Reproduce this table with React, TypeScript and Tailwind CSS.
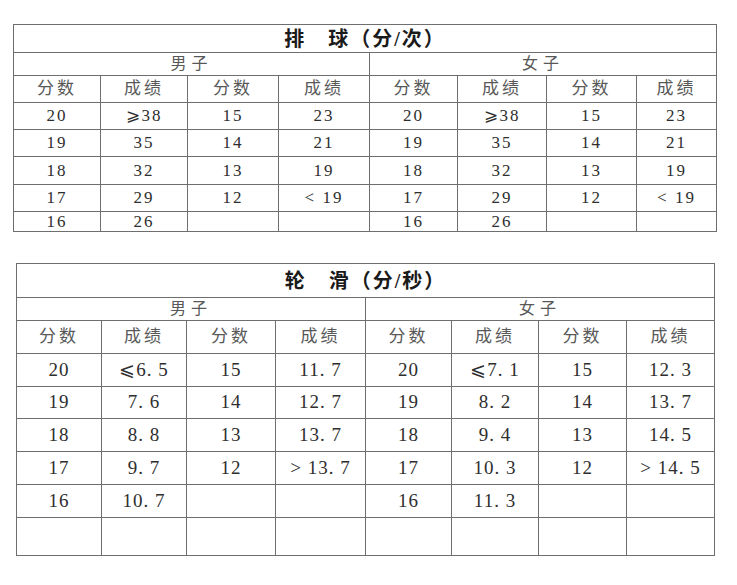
// two score sheets: volleyball and roller skating
const HEAD = ["分数", "成绩", "分数", "成绩", "分数", "成绩", "分数", "成绩"];

const volleyballRows = [
  ["20", "⩾38", "15", "23", "20", "⩾38", "15", "23"],
  ["19", "35", "14", "21", "19", "35", "14", "21"],
  ["18", "32", "13", "19", "18", "32", "13", "19"],
  ["17", "29", "12", "< 19", "17", "29", "12", "< 19"],
  ["16", "26", "", "", "16", "26", "", ""],
];

const skatingRows = [
  ["20", "⩽6. 5", "15", "11. 7", "20", "⩽7. 1", "15", "12. 3"],
  ["19", "7. 6", "14", "12. 7", "19", "8. 2", "14", "13. 7"],
  ["18", "8. 8", "13", "13. 7", "18", "9. 4", "13", "14. 5"],
  ["17", "9. 7", "12", "> 13. 7", "17", "10. 3", "12", "> 14. 5"],
  ["16", "10. 7", "", "", "16", "11. 3", "", ""],
  ["", "", "", "", "", "", "", ""],
];

type Props = {
  title: string;
  rows: string[][];
  gridClass: string;
  numClass: string;
};

function ScoreTable({ title, rows, gridClass, numClass }: Props) {
  return (
    <div className={`grid gap-px bg-[#6e6e6e] border border-[#6e6e6e] w-fit ${gridClass}`}>
      <div className="col-span-8 bg-white flex items-center justify-center text-[20px] font-bold text-[#1a1a1a] tracking-[2px]">
        {title}
      </div>
      <div className="col-span-4 bg-white flex items-center justify-center text-[16px] text-[#585858] tracking-[5px]">
        男子
      </div>
      <div className="col-span-4 bg-white flex items-center justify-center text-[16px] text-[#585858] tracking-[5px]">
        女子
      </div>
      {HEAD.map((t, i) => (
        <div
          key={i}
          className="bg-white flex items-center justify-center text-[17px] text-[#585858] tracking-[3px]"
        >
          {t}
        </div>
      ))}
      {rows.flatMap((r, ri) =>
        r.map((v, ci) => (
          <div
            key={`${ri}-${ci}`}
            className={`bg-white flex items-center justify-center text-[#2e2e2e] ${numClass}`}
          >
            {v}
          </div>
        ))
      )}
    </div>
  );
}

export default function App() {
  return (
    <div
      className="w-[737px] h-[585px] bg-white overflow-hidden flex flex-col"
      style={{ fontFamily: '"Liberation Serif", "Noto Sans CJK SC", serif' }}
    >
      <div className="mt-[24px] ml-[13px]">
        <ScoreTable
          title="排　球（分/次）"
          rows={volleyballRows}
          gridClass="grid-cols-[86px_86px_90px_90px_87px_88px_89px_79px] grid-rows-[27px_22px_26px_26px_26px_27px_26px_19px]"
          numClass="text-[17px] tracking-[2px]"
        />
      </div>
      <div className="mt-[31px] ml-[16px]">
        <ScoreTable
          title="轮　滑（分/秒）"
          rows={skatingRows}
          gridClass="grid-cols-[84px_84px_88px_89px_85px_86px_87px_87px] grid-rows-[33px_22px_32px_32px_31px_32px_32px_32px_37px]"
          numClass="text-[19px] tracking-[1px]"
        />
      </div>
    </div>
  );
}
